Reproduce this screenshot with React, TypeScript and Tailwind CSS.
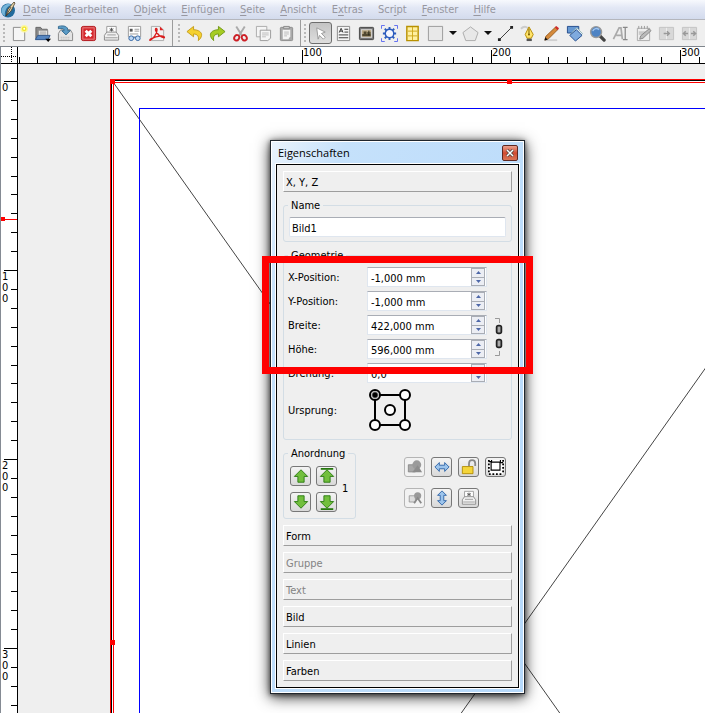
import React from "react";

type IconProps = { children: React.ReactNode; className?: string };

function Icon({ children, className = "size-[17px]" }: IconProps) {
  return (
    <svg viewBox="0 0 18 18" fill="none" className={`${className} shrink-0`} aria-hidden="true">
      {children}
    </svg>
  );
}

const menus = ["Datei", "Bearbeiten", "Objekt", "Einfügen", "Seite", "Ansicht", "Extras", "Script", "Fenster", "Hilfe"];
const mnemonics = [0, 0, 0, 0, 0, 0, 1, 3, 0, 0];

function Printer() {
  return (
    <>
      <path d="M4 8V1.500h10V8" fill="#fff" stroke="#999" />
      <path d="M9 3v4M7 4l4 2M11 4l-4 2" stroke="#555" />
      <path d="M4 7.500L1.500 11v5h15v-5L14 7.500z" fill="#f0f0f0" stroke="#888" />
      <path d="M4.500 10.500h9M2.500 13.500h13" stroke="#999" />
    </>
  );
}

const fileIcons: [string, React.ReactNode][] = [
  ["Neu", <><path d="M2.500 2.500h12v14h-12z" fill="#f6f6f6" stroke="#888" /><circle cx="14" cy="4" r="4" fill="#fbf6a0" /><circle cx="14" cy="4" r="2.500" fill="#f2e62b" /><circle cx="14" cy="4" r="1" fill="#fff" /></>],
  ["Öffnen", <><path d="M2 15V2.500h5l1.500 2H14V15z" fill="#888" stroke="#666" /><path d="M4.500 5.500h10v6h-10z" fill="#eee" stroke="#888" /><path d="M6 7.500h7M6 9.500h7" stroke="#999" /><path d="M1.500 15.500L4 11h13l-2 4.500z" fill="#5585c0" stroke="#2f568d" /><path d="M12 14.500h6l-3 3.500z" fill="#000" /></>],
  ["Speichern", <><path d="M1.500 9L4 5h10l2.500 4v7.500h-15z" fill="#e4e4e4" stroke="#888" /><path d="M4 13h10M4 15h10" stroke="#aaa" strokeDasharray="1 1" /><path d="M1.500 1.500C7 0 12 1.500 11.500 6H14L9.500 10.500 5 6h2.500C8 4 5.500 3 1.500 4z" fill="#5a9bc6" stroke="#32698f" /></>],
  ["Schließen", <><rect x="1.500" y="1.500" width="15" height="15" rx="2" fill="#d5262c" stroke="#b0141a" /><rect x="3" y="3" width="12" height="12" stroke="#ea8585" /><path d="M6 6l6 6M12 6l-6 6" stroke="#fff" strokeWidth="3" /></>],
  ["Drucken", <Printer />],
  ["Preflight", <><path d="M2.500 1.500h13v11h-13z" fill="#fff" stroke="#999" /><path d="M4 4h3v3H4z" fill="#555" /><path d="M9 4.500h5M9 6.500h5M4 9.500h9" stroke="#999" /><circle cx="5.500" cy="14" r="2.500" fill="#bed8f5" stroke="#3467a5" /><circle cx="12.500" cy="14" r="2.500" fill="#bed8f5" stroke="#3467a5" /><path d="M8 13.500h2" stroke="#3467a5" /></>],
  ["PDF", <><path d="M2.500 1.500h9l4 4v11h-13z" fill="#f3f3f3" stroke="#aaa" /><path d="M11.500 1.500v4h4z" fill="#d22" /><path d="M1.500 16c2-1 7-6 7-11 0-2-2-1.500-1.500.500C8 9 12 13 16 13.500c1-.5-1-2-3-2-4 .2-8 1.500-11.500 3.500-1 1-.8 1.500 0 1z" stroke="#d91e1e" strokeWidth="1.500" /></>],
];

const editIcons: [string, React.ReactNode][] = [
  ["Rückgängig", <path d="M1 7L8 1.500V5c5 0 9 2.500 8.500 6-.3 2-1.500 4-3.500 5.500C14 12 12 9.500 8 9.500v3z" fill="#f5d12f" stroke="#c49b1a" />],
  ["Wiederherstellen", <path d="M17 7L10 1.500V5C5 5 1 7.500 1.500 11c.3 2 1.500 4 3.500 5.500C4 12 6 9.500 10 9.500v3z" fill="#a6cc22" stroke="#729814" />],
  ["Ausschneiden", <><path d="M4.500 1.500L11 12M13.500 1.500L7 12" stroke="#aaa" strokeWidth="2" /><ellipse cx="5" cy="13.500" rx="2.500" ry="3" stroke="#cc1f26" strokeWidth="2" transform="rotate(30 5 13.500)" /><ellipse cx="13" cy="13.500" rx="2.500" ry="3" stroke="#cc1f26" strokeWidth="2" transform="rotate(-30 13 13.500)" /></>],
  ["Kopieren", <><path d="M1.500 1.500h11v11h-11z" fill="#f5f5f5" stroke="#aaa" /><path d="M5.500 5.500h11V14l-3 2.500h-8z" fill="#f5f5f5" stroke="#999" /><path d="M7.500 8.500h7M7.500 10.500h7M7.500 12.500h4" stroke="#bbb" /></>],
  ["Einfügen", <><rect x="2.500" y="2.500" width="13" height="14" rx="1" fill="#aaa" stroke="#8c8c8c" /><path d="M5 5h8v7l-2 3H5z" fill="#f4f4f4" /><path d="M6.500 7.500h5M6.500 9.500h5M6.500 11.500h3" stroke="#bbb" /><path d="M6 1.500h6v2.500H6z" fill="#ccc" stroke="#888" /></>],
];

const frameIcons: [string, React.ReactNode][] = [
  ["Textrahmen", <><path d="M2.500 1.500h13v15h-13z" fill="#f5f5f5" stroke="#888" /><path d="M4.500 8l2-4.500L8.500 8M5 6.500h3M10 4.500h4M10 7.500h4M4 10.500h10M4 13.500h10" stroke="#333" /></>],
  ["Bildrahmen", <><rect x="1.500" y="2.500" width="15" height="13" rx="1" fill="#777" stroke="#444" /><rect x="3.500" y="5" width="11" height="8" fill="#b8a682" stroke="#ddd" /><path d="M4.500 9.500h9V12h-9zM6 7h3v3H6z" fill="#51482f" /><path d="M11.500 6v5M9.500 8.500h4" stroke="#221" /></>],
  ["Renderrahmen", <><path d="M9 2v2.500M9 13.500V16M2 9h2.500M13.500 9H16M4 4l2 2M12 12l2 2M4 14l2-2M12 6l2-2" stroke="#2b5bbd" strokeWidth="2" /><circle cx="9" cy="9" r="4.500" fill="#f4f6ff" stroke="#2b5bbd" strokeWidth="1.500" /><path d="M.5 4V.5H4M14 .5h3.500V4M.5 14v3.500H4M14 17.500h3.500V14" stroke="#5a68f0" /></>],
  ["Tabelle", <><path d="M3 1.500h12v15H3z" fill="#fff0a0" stroke="#b89100" strokeWidth="1.500" /><path d="M9 2v14M4 6.500h10M4 11.500h10" stroke="#cfa81c" /></>],
  ["Form einfügen", <path d="M1.500 1.500h15v15h-15z" fill="#e8e8e8" stroke="#999" />],
];

const drawIcons: [string, React.ReactNode][] = [
  ["Linie", <><path d="M3 15L15 3" stroke="#333" /><path d="M1 14h3v3H1zM14 1h3v3h-3z" fill="#222" /></>],
  ["Bézierkurve", <><path d="M1 4c4-4 9-2 9 5" stroke="#ccc" strokeWidth="2" /><path d="M9.500 2L5.500 10l2 4h4.500l2-4z" fill="#ffe46a" stroke="#b68a00" /><path d="M9.500 4v6" stroke="#775b00" /><circle cx="9.500" cy="10" r="1" fill="#775b00" /><path d="M7 14.500h5.500V17H7z" fill="#555" /></>],
  ["Freihandlinie", <><path d="M3 16h12" stroke="#d0d0d0" strokeWidth="2" /><path d="M2 16l1-4L13 2.500 15.500 5 6 14.500z" fill="#d58a3b" stroke="#9a6127" /><path d="M12.500 2.500L14 1l3 2.500-1.500 2z" fill="#cf2b2b" /><path d="M1.500 16.500l1-3.500 2.500 2.500z" fill="#111" /></>],
  ["Drehen", <><path d="M1.500 1.500h12v7h-12z" fill="#6698d2" stroke="#244c8c" /><path d="M5.500 9l6-6 6 6-6 6z" fill="#dfe8f2" stroke="#9bb" /><path d="M4 11l7-6 6 6-7 6z" fill="#7faade" stroke="#244c8c" /></>],
  ["Zoom", <><path d="M11 11l5 5" stroke="#444" strokeWidth="3.500" strokeLinecap="round" /><circle cx="7.500" cy="7.500" r="5.800" fill="#4d83c4" stroke="#999" strokeWidth="1.500" /><path d="M4 6.500C5 3.500 9 3 10.500 5" stroke="#a2c5ee" strokeWidth="1.500" /></>],
  ["Rahmeninhalt bearbeiten", <><path d="M1.500 15L7.500 3h2l1.500 12M4.500 11h6" stroke="#aaa" strokeWidth="1.800" /><path d="M11.500 2.500h2.500v13h-2.500M16.500 2.500H14M14 15.500h2.500" stroke="#888" strokeWidth="1.300" /></>],
  ["Texteditor", <><path d="M2.500 3.500h13v13h-13z" fill="#eee" stroke="#aaa" /><path d="M4 1v3M7 1v3M10 1v3M13 1v3" stroke="#999" /><path d="M4 7.500h7M4 9.500h5" stroke="#aaa" /><path d="M5 15l1-3.500L15 4l2 2-8.500 8z" fill="#bbb" stroke="#888" /></>],
  ["Textrahmen verketten", <><path d="M1.500 2.500h15v13h-15z" fill="#d8d8d8" stroke="#c4c4c4" /><path d="M9 3v12" stroke="#eee" /><path d="M6 9h6M9.500 6.500L12 9l-2.500 2.500" stroke="#999" strokeWidth="1.500" /></>],
  ["Verkettung lösen", <><path d="M1.500 2.500h15v13h-15z" fill="#d8d8d8" stroke="#c4c4c4" /><path d="M9 3v12" stroke="#eee" /><path d="M2.500 9h5M10.500 9h5M5 6.500L2.500 9 5 11.500M13 6.500L15.500 9 13 11.500" stroke="#999" strokeWidth="1.500" /></>],
];

function ToolButton({ label, children, active = false }: { label: string; children: React.ReactNode; active?: boolean }) {
  return (
    <button
      type="button"
      aria-label={label}
      className={`flex h-[22px] w-[23px] shrink-0 items-center justify-center ${active ? "rounded-[3px] border border-[#6d6d6d] bg-gradient-to-b from-[#c4c4c4] to-[#dedede]" : ""}`}
    >
      {children}
    </button>
  );
}

function DropButton({ label }: { label: string }) {
  return (
    <button type="button" aria-label={label} className="flex h-[22px] w-3 shrink-0 items-center justify-center">
      <svg viewBox="0 0 8 4" className="h-1 w-2" aria-hidden="true"><path d="M0 0h8L4 4z" fill="#111" /></svg>
    </button>
  );
}

function Grip() {
  return (
    <div className="flex h-[18px] w-2 shrink-0 flex-col items-center justify-between">
      {[0, 1, 2, 3, 4].map((i) => <span key={i} className="size-0.5 bg-[#b9b9b9]" />)}
    </div>
  );
}

function Tools({ items }: { items: [string, React.ReactNode][] }) {
  return <>{items.map(([label, art]) => <ToolButton key={label} label={label}><Icon>{art}</Icon></ToolButton>)}</>;
}

function Toolbar() {
  return (
    <div role="toolbar" className="flex h-[28px] shrink-0 items-center overflow-hidden border-y border-t-[#b4b6bd] border-b-[#7f858c] bg-[#efefef]">
      <Grip />
      <Tools items={fileIcons} />
      <span className="ml-[3px] h-full w-px shrink-0 bg-[#9c9c9c]" />
      <span className="w-0.5 shrink-0" /><Grip />
      <Tools items={editIcons} />
      <span className="ml-0.5 h-full w-px shrink-0 bg-[#9c9c9c]" />
      <Grip />
      <ToolButton label="Auswählen" active>
        <Icon><path d="M5 3l9 4.500-4 1.500 4 4-2 2-4-4-1.500 4z" fill="#fff" stroke="#999" /></Icon>
      </ToolButton>
      <Tools items={frameIcons} />
      <DropButton label="Formauswahl" />
      <ToolButton label="Polygon"><Icon><path d="M9 2l8 6-3 8.500H4L1 8z" fill="#e8e8e8" stroke="#aaa" /></Icon></ToolButton>
      <DropButton label="Polygonauswahl" />
      <Tools items={drawIcons} />
    </div>
  );
}

const MAJOR = 189;
const tickOffsets = [0, 19, 38, 57, 76, 95, 113, 132, 151, 170];

function ticksFrom(origin: number, length: number) {
  const result: { at: number; major: boolean }[] = [];
  for (let n = -1; origin + n * MAJOR < length; n++) {
    tickOffsets.forEach((o, i) => result.push({ at: origin + n * MAJOR + o, major: i === 0 }));
  }
  return result;
}

function TopRuler() {
  return (
    <svg className="h-[17px] min-w-0 flex-1 bg-white text-[11px]" shapeRendering="crispEdges">
      {ticksFrom(95, 2400).map(({ at, major }) => <path key={at} d={`M${at + 0.5} ${major ? 3 : 10}V17`} stroke="#000" />)}
      {[0, 100, 200, 300].map((v, i) => <text key={v} x={96 + i * MAJOR} y={9}>{v}</text>)}
      <rect y="16" width="100%" height="1" />
    </svg>
  );
}

function LeftRuler() {
  return (
    <svg className="w-[17px] shrink-0 bg-white text-[11px]" shapeRendering="crispEdges">
      {ticksFrom(17, 2400).map(({ at, major }) => <path key={at} d={`M${major ? 3 : 10} ${at + 0.5}H17`} stroke="#000" />)}
      {["0", "100", "200", "300"].map((v, i) => (
        <text key={v} y={27 + i * MAJOR}>
          {v.split("").map((c, k) => <tspan key={k} x="1" dy={k ? 11 : 0}>{c}</tspan>)}
        </text>
      ))}
      <path d="M0 155.500H17" stroke="#f00" />
      <path d="M0 153h4v4H0z" fill="#f00" />
      <rect x="16" width="1" height="100%" />
    </svg>
  );
}

function Canvas() {
  return (
    <svg className="min-w-0 flex-1 bg-[#efefef]">
      <rect x="93" y="16" width="4000" height="4000" fill="#fff" />
      <path d="M95 18L890 1141M890 18L95 1141" stroke="#444" />
      <g shapeRendering="crispEdges">
        <path d="M4000 44.500H121.500V4000" fill="none" stroke="#00f" />
        <path d="M4000 16.500H93.500V4000" fill="none" stroke="#000" />
        <path d="M4000 15.500H92.500V4000M4000 18.500H95.500V4000" fill="none" stroke="#f00" />
        <path d="M92 15h5v5h-5zM489 15h5v5h-5zM92 576h5v5h-5z" fill="#f00" />
      </g>
    </svg>
  );
}

function SectionButton({ label, muted = false }: { label: string; muted?: boolean }) {
  return (
    <button
      type="button"
      disabled={muted}
      className="h-[21px] w-full shrink-0 border border-t-white border-r-[#9d9d9d] border-b-[#9d9d9d] border-l-white px-0.5 pt-0.5 text-left disabled:text-[#838383]"
    >
      {label}
    </button>
  );
}

function Group({ title, className = "", bodyClassName, children }: { title: string; className?: string; bodyClassName: string; children: React.ReactNode }) {
  return (
    <fieldset className={`min-w-0 rounded-[3px] border border-[#d3dde5] ${className}`}>
      <legend className="ml-1 h-[14px] px-[3px] leading-4">{title}</legend>
      <div className={bodyClassName}>{children}</div>
    </fieldset>
  );
}

function SpinRow({ id, label, value }: { id: string; label: string; value: string }) {
  return (
    <div className="flex h-6 items-start">
      <label htmlFor={id} className="w-[79px] leading-[22px]">{label}</label>
      <div className="flex h-5 w-[120px] border border-t-[#a9adb5] border-r-[#dfe6ef] border-b-[#dfe6ef] border-l-[#dfe6ef] bg-white">
        <input id={id} defaultValue={value} className="min-w-0 flex-1 bg-transparent px-[3px] pt-[3px] outline-none" />
        <div className="mr-px flex h-[18px] w-[14px] flex-col border border-[#a9adb5] bg-[#eceef4]">
          <button type="button" aria-label={`${label} erhöhen`} className="flex flex-1 items-center justify-center border-b border-[#a9adb5]">
            <svg viewBox="0 0 5 3" className="h-[3px] w-[5px]"><path d="M0 3h5L2.500 0z" fill="#4d67a8" /></svg>
          </button>
          <button type="button" aria-label={`${label} verringern`} className="flex flex-1 items-center justify-center">
            <svg viewBox="0 0 5 3" className="h-[3px] w-[5px]"><path d="M0 0h5L2.500 3z" fill="#4d67a8" /></svg>
          </button>
        </div>
      </div>
    </div>
  );
}

function OriginPicker() {
  const dot = "size-3 appearance-none rounded-full border-2 border-black bg-white checked:bg-[radial-gradient(circle,#000_2px,#fff_4px)]";
  return (
    <div role="radiogroup" aria-label="Ursprung" className="relative flex size-[42px] flex-col justify-between">
      <div className="absolute inset-[5px] border-2 border-black" />
      <div className="relative flex justify-between">
        <input type="radio" name="origin" aria-label="Oben links" defaultChecked className={dot} />
        <input type="radio" name="origin" aria-label="Oben rechts" className={dot} />
      </div>
      <div className="relative flex justify-center">
        <input type="radio" name="origin" aria-label="Mitte" className={dot} />
      </div>
      <div className="relative flex justify-between">
        <input type="radio" name="origin" aria-label="Unten links" className={dot} />
        <input type="radio" name="origin" aria-label="Unten rechts" className={dot} />
      </div>
    </div>
  );
}

function PanelButton({ label, disabled = false, children }: { label: string; disabled?: boolean; children: React.ReactNode }) {
  return (
    <button
      type="button"
      aria-label={label}
      disabled={disabled}
      className="flex h-5 w-[21px] items-center justify-center rounded-[3px] border border-[#777] bg-gradient-to-b from-[#f4f4f4] to-[#d9d9d9] disabled:border-[#b5b5b5] disabled:from-[#f2f2f2] disabled:to-[#f2f2f2]"
    >
      <Icon className="size-4">{children}</Icon>
    </button>
  );
}

const up = "M9 2l7.500 7.500h-4V16h-7V9.500h-4z";
const down = "M9 16L1.500 8.500h4V2h7v6.500h4z";

function Arrangement() {
  return (
    <Group title="Anordnung" className="w-[73px]" bodyClassName="px-1.5 pt-1.5 pb-1.5">
      <div className="flex items-center gap-[5px]">
        <div className="grid grid-cols-2 gap-x-[5px] gap-y-1.5">
          <PanelButton label="Eine Ebene höher"><path d={up} fill="#72bf3d" stroke="#26780e" /></PanelButton>
          <PanelButton label="Ganz nach oben"><path d="M2 1h14" stroke="#26780e" strokeWidth="2" /><path d={up} fill="#72bf3d" stroke="#26780e" /></PanelButton>
          <PanelButton label="Eine Ebene tiefer"><path d={down} fill="#72bf3d" stroke="#26780e" /></PanelButton>
          <PanelButton label="Ganz nach unten"><path d="M2 17h14" stroke="#26780e" strokeWidth="2" /><path d={down} fill="#72bf3d" stroke="#26780e" /></PanelButton>
        </div>
        <span>1</span>
      </div>
    </Group>
  );
}

function ItemActions() {
  return (
    <div className="mt-[11px] mr-1.5 grid grid-cols-4 content-start gap-x-1.5 gap-y-[11px]">
      <PanelButton label="Gruppieren" disabled><path d="M1.500 6.500h8v8h-8z" fill="#a8a8a8" stroke="#888" /><circle cx="11" cy="6.500" r="5" fill="#9a9a9a" /><path d="M6 15l6-8 5 8z" fill="#8c8c8c" /></PanelButton>
      <PanelButton label="Horizontal spiegeln"><path d="M1 9l5-5v3h6V4l5 5-5 5v-3H6v3z" fill="#9cc4ec" stroke="#2c62a6" /></PanelButton>
      <PanelButton label="Objekt sperren"><path d="M9 8V5c0-5 7-5 7 0v3" stroke="#888" strokeWidth="2" /><path d="M1.500 8.500h12v8h-12z" fill="#f4d53a" stroke="#b18b00" /></PanelButton>
      <PanelButton label="Größe sperren"><path d="M1 1h16v16H1z" fill="#fff" /><path d="M1 1v16M17 1v16M1 17h16" stroke="#000" strokeWidth="2" strokeDasharray="2 2" /><path d="M3.500 3.500h10v9h-10zM1 3h3V1M14 1v3h3" stroke="#000" strokeWidth="1.300" /></PanelButton>
      <PanelButton label="Gruppe auflösen" disabled><path d="M2.500 6.500h7v7h-7z" fill="#ddd" stroke="#999" /><circle cx="12" cy="6.500" r="4" fill="#999" /><path d="M8 15l4-6 4 6" stroke="#888" strokeWidth="2" /></PanelButton>
      <PanelButton label="Vertikal spiegeln"><path d="M9 1l5 5h-3v6h3l-5 5-5-5h3V6H4z" fill="#9cc4ec" stroke="#2c62a6" /></PanelButton>
      <PanelButton label="Drucken zulassen"><Printer /></PanelButton>
    </div>
  );
}

const geometry = [
  ["x", "X-Position:", "-1,000 mm"],
  ["y", "Y-Position:", "-1,000 mm"],
  ["w", "Breite:", "422,000 mm"],
  ["h", "Höhe:", "596,000 mm"],
  ["r", "Drehung:", "0,0"],
];

function Properties() {
  return (
    <section className="absolute top-[140px] left-[270px] w-[255px] border border-[#20262d] bg-[#b9d9f8] shadow-[0_3px_14px_rgba(0,0,0,0.8),0_1px_5px_rgba(0,0,0,0.6)]">
      <div className="border border-white bg-gradient-to-br from-[#eaf3fc] via-[#c5e1fb] via-15% to-[#b5d8fa] px-[3px] pb-[3px]">
        <header className="flex h-[21px] items-center justify-between pr-0.5 pl-[3px]">
          <h2 className="font-['Open_Sans',sans-serif] text-[11px]">Eigenschaften</h2>
          <button type="button" aria-label="Schließen" className="flex size-4 items-center justify-center rounded-[2px] border border-[#5e2822] bg-gradient-to-b from-[#e9a18e] via-[#cf4a31] to-[#d87558]">
            <svg viewBox="0 0 8 8" className="size-2"><path d="M1 1l6 6M7 1L1 7" stroke="#444" strokeWidth="3" /><path d="M1 1l6 6M7 1L1 7" stroke="#fff" strokeWidth="1.500" /></svg>
          </button>
        </header>
        <div className="border border-white">
          <div className="flex flex-col gap-1.5 border border-black bg-[#efefef] px-1.5 py-1.5">
            <SectionButton label="X, Y, Z" />
            <Group title="Name" bodyClassName="px-[5px] pt-[5px] pb-1">
              <input aria-label="Name" defaultValue="Bild1" className="block h-5 w-full rounded-[2px] border border-t-[#a9adb5] border-r-[#dfe6ef] border-b-[#dfe6ef] border-l-[#dfe6ef] bg-white px-0.5 pt-0.5" />
            </Group>
            <Group title="Geometrie" bodyClassName="px-1 pt-[5px] pb-2">
              <div className="flex items-start">
                <div>
                  {geometry.map(([id, label, value]) => <SpinRow key={id} id={id} label={label} value={value} />)}
                </div>
                <button type="button" aria-label="Seitenverhältnis beibehalten" className="mt-[50px] ml-[7px]">
                  <svg viewBox="0 0 9 40" fill="none" className="h-10 w-[9px]">
                    <path d="M1 1.500h4.500V6M1 38.500h4.500V34" stroke="#999" />
                    <rect x="2.500" y="8.500" width="5" height="8" rx="2" fill="#777" stroke="#222" strokeWidth="1.500" />
                    <rect x="2.500" y="22.500" width="5" height="8" rx="2" fill="#777" stroke="#222" strokeWidth="1.500" />
                    <path d="M5 10v5M5 24v5" stroke="#ddd" />
                  </svg>
                </button>
              </div>
              <div className="flex items-center pt-0.5">
                <span className="w-[81px] pt-0.5">Ursprung:</span>
                <OriginPicker />
              </div>
            </Group>
            <div className="flex items-start justify-between">
              <Arrangement />
              <ItemActions />
            </div>
            <SectionButton label="Form" />
            <SectionButton label="Gruppe" muted />
            <SectionButton label="Text" muted />
            <SectionButton label="Bild" />
            <SectionButton label="Linien" />
            <SectionButton label="Farben" />
          </div>
        </div>
      </div>
    </section>
  );
}

export default function App() {
  return (
    <div className="relative flex h-screen flex-col overflow-hidden bg-[#efefef] font-['DejaVu_Sans_Condensed','DejaVu_Sans',sans-serif] text-[11px] leading-[14px] text-black">
      <nav className="flex h-[19px] shrink-0 items-center gap-[15px] bg-gradient-to-b from-[#f7f9fd] via-[#e3e8f5] via-40% to-[#d3dbed] text-[#9797a0]">
        <svg viewBox="0 0 16 16" className="-mr-2 size-4 shrink-0" aria-hidden="true">
          <circle cx="8" cy="8.500" r="7" fill="#216a9c" />
          <path d="M1.500 8C3 2 9 1 12 3 8 3 4 8 5 14 3 13 1 11 1.500 8z" fill="#74b3d8" />
          <path d="M14 0L8 7l-2 7 5-5 4-8z" fill="#e9d9ae" stroke="#4b3b24" strokeWidth=".8" />
          <path d="M6 14l5-9" stroke="#333" strokeWidth=".8" />
        </svg>
        {menus.map((m, i) => (
          <button key={m} type="button" className="shrink-0">
            {m.slice(0, mnemonics[i])}
            <u className="underline-offset-2">{m[mnemonics[i]]}</u>
            {m.slice(mnemonics[i] + 1)}
          </button>
        ))}
      </nav>
      <Toolbar />
      <main className="flex min-h-0 flex-1 flex-col border-l border-[#858b94]">
        <div className="flex shrink-0">
          <svg className="h-[17px] w-[17px] shrink-0 bg-white" shapeRendering="crispEdges">
            <path d="M0 9.500h16M10.500 0v16" stroke="#000" strokeDasharray="1 1" />
            <path d="M0 16.500h17M16.500 0v17" stroke="#000" />
          </svg>
          <TopRuler />
        </div>
        <div className="flex min-h-0 flex-1">
          <LeftRuler />
          <Canvas />
        </div>
      </main>
      <Properties />
      <div className="pointer-events-none absolute top-[256px] left-[262px] h-[118px] w-[271px] border-[7px] border-[#f00]" />
    </div>
  );
}
